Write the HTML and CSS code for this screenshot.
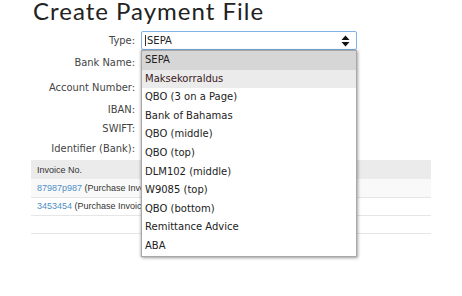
FILE: index.html
```html
<!DOCTYPE html>
<html lang="en">
<head>
  <meta charset="UTF-8" />
  <title>Create Payment File</title>
  <link rel="stylesheet" href="styles.css">
</head>
<body>

  <h1 class="page-title">Create Payment File</h1>

  <div class="form-area">
    <div class="form-row row-type">
      <label>Type:</label>
      <div class="select-box">
        <span class="select-value">SEPA</span>
        <svg class="select-arrow" width="9" height="12" viewBox="0 0 9 12">
          <path d="M4.5 0.5 L8.5 5 H0.5 Z M4.5 11.5 L8.5 7 H0.5 Z" fill="#111"/>
        </svg>
      </div>
    </div>
    <div class="form-row row-bank"><label>Bank Name:</label></div>
    <div class="form-row row-account"><label>Account Number:</label></div>
    <div class="form-row row-iban"><label>IBAN:</label></div>
    <div class="form-row row-swift"><label>SWIFT:</label></div>
    <div class="form-row row-ident"><label>Identifier (Bank):</label></div>

    <ul class="dropdown">
      <li class="selected">SEPA</li>
      <li class="hover">Maksekorraldus</li>
      <li>QBO (3 on a Page)</li>
      <li>Bank of Bahamas</li>
      <li>QBO (middle)</li>
      <li>QBO (top)</li>
      <li>DLM102 (middle)</li>
      <li>W9085 (top)</li>
      <li>QBO (bottom)</li>
      <li>Remittance Advice</li>
      <li>ABA</li>
    </ul>
  </div>

  <table class="invoice-table">
    <thead>
      <tr><th>Invoice No.</th></tr>
    </thead>
    <tbody>
      <tr><td><a href="#">87987p987</a> (Purchase Invoice)</td></tr>
      <tr><td><a href="#">3453454</a> (Purchase Invoice)</td></tr>
      <tr><td></td></tr>
    </tbody>
  </table>

</body>
</html>
```

FILE: styles.css
```css
* {
  box-sizing: border-box;
}

html, body {
  margin: 0;
  padding: 0;
  background: #fff;
  font-family: 'DejaVu Sans', Verdana, sans-serif;
  color: #333;
}

body {
  min-height: 296px;
}

.page-title {
  margin: -1px 0 0 33px;
  height: 32px;
  font-family: 'Lato', 'Open Sans', sans-serif;
  font-weight: normal;
  font-size: 24px;
  line-height: 24px;
  color: #222;
  letter-spacing: 1px;
}

.form-area {
  position: relative;
}

.form-row {
  display: flex;
  align-items: center;
}

.form-row label {
  width: 138px;
  padding-right: 3px;
  text-align: right;
  font-family: 'DejaVu Sans Condensed', 'DejaVu Sans', sans-serif;
  font-size: 11px;
  color: #444;
}

.row-type { height: 19px; }
.row-bank { height: 24px; }
.row-account { height: 26px; }
.row-iban { height: 18px; }
.row-swift { height: 20px; }
.row-ident { height: 20px; }

.select-box {
  width: 216px;
  height: 19px;
  margin-left: 3px;
  border: 1px solid #7fb2e5;
  border-radius: 2px;
  display: flex;
  align-items: center;
  justify-content: space-between;
  padding: 0 6px 0 3px;
  font-size: 10px;
  color: #222;
}

.select-value {
  border-left: 1px solid #333;
  padding-left: 1px;
}

.dropdown {
  position: absolute;
  top: 19px;
  left: 141px;
  width: 216px;
  margin: 0;
  padding: 0;
  list-style: none;
  background: #fff;
  border: 1px solid #a8a8a8;
  box-shadow: 1px 1px 3px rgba(0, 0, 0, 0.35), -1px 0 2px rgba(0, 0, 0, 0.15);
  z-index: 10;
}

.dropdown li {
  height: 18.6px;
  line-height: 18.6px;
  padding-left: 3px;
  font-size: 10px;
  color: #222;
}

.dropdown li.selected {
  background: #d6d6d6;
}

.dropdown li.hover {
  background: #ebebeb;
  color: #3a1a1a;
}

.invoice-table {
  margin: 2px 0 0 31px;
  width: 400px;
  border-collapse: collapse;
  font-family: 'Liberation Sans', Arial, sans-serif;
  font-size: 9px;
}

.invoice-table th {
  height: 19px;
  background: #ebebeb;
  text-align: left;
  font-weight: normal;
  padding: 0 6px;
  color: #333;
}

.invoice-table td {
  height: 18px;
  padding: 0 6px;
  border-bottom: 1px solid #e6e6e6;
  white-space: nowrap;
}

.invoice-table tbody tr:nth-child(odd) td {
  background: #f9f9f9;
}

.invoice-table tbody tr:last-child td {
  background: #fff;
}

.invoice-table a {
  color: #4e8fc6;
  text-decoration: none;
}
```
